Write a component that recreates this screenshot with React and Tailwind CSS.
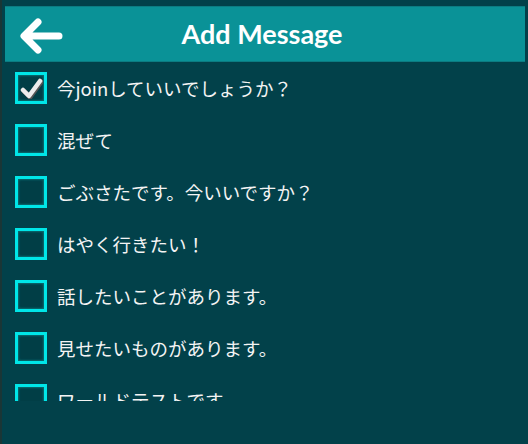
import React, { useState } from "react";

const messages = [
  "今joinしていいでしょうか？",
  "混ぜて",
  "ごぶさたです。今いいですか？",
  "はやく行きたい！",
  "話したいことがあります。",
  "見せたいものがあります。",
  "ワールドテストです",
];

function CheckBox({ checked }) {
  return (
    <div className="w-8 h-8 shrink-0 border-[3px] border-[#00e6e8] bg-[#013e46] shadow-[inset_0_0_2px_1px_#0a6d72] flex items-center justify-center">
      {checked && (
        <svg width="24" height="22" viewBox="0 0 24 22">
          <path d="M4 13 L10 19 L21 4" fill="none" stroke="#555" strokeWidth="5" strokeLinecap="round" strokeLinejoin="round" transform="translate(1,1)" />
          <path d="M4 13 L10 19 L21 4" fill="none" stroke="#ececec" strokeWidth="4.5" strokeLinecap="round" strokeLinejoin="round" />
        </svg>
      )}
    </div>
  );
}

export default function App() {
  const [picked] = useState([0]);
  return (
    <div className="w-[528px] h-[444px] bg-[#02414a] border-l-2 border-[#1a3636] overflow-hidden" style={{ fontFamily: "'Noto Sans CJK JP', sans-serif" }}>
      <div className="mx-[3px] mt-[6px] h-[56px] bg-[#0a9297] border-y border-[#0c7c82] flex items-center relative">
        <svg className="absolute left-[14px] top-[10px]" width="46" height="38" viewBox="0 0 46 38">
          <path d="M40 19 H8 M19 5 L5 19 L19 33" fill="none" stroke="#fff" strokeWidth="7" strokeLinecap="round" strokeLinejoin="round" />
        </svg>
        <div className="flex-1 text-center text-white text-[27px] font-bold pr-[6px]" style={{ fontFamily: "Lato, sans-serif" }}>
          Add Message
        </div>
      </div>
      <div className="h-[339px] overflow-hidden pl-[13px] pt-[10px] flex flex-col gap-5">
        {messages.map((m, i) => (
          <div key={i} className="flex items-center gap-[10px] h-8 shrink-0">
            <CheckBox checked={picked.includes(i)} />
            <span className="text-[#f4f4f4] text-[18.5px] leading-none">{m}</span>
          </div>
        ))}
      </div>
    </div>
  );
}
